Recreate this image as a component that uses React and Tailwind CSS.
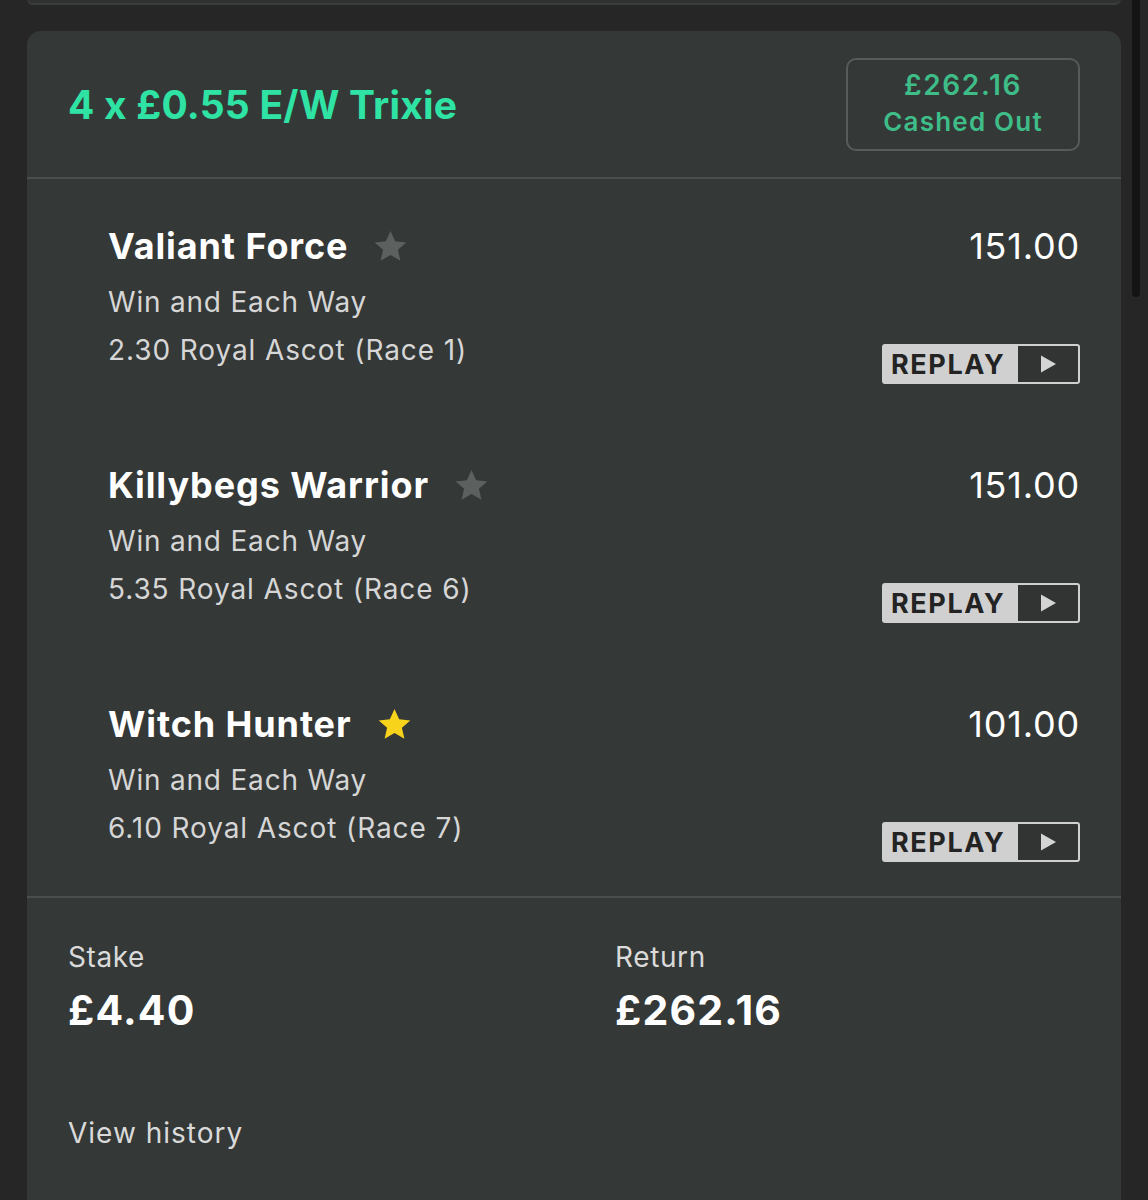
const selections = [
  { name: 'Valiant Force', race: '2.30 Royal Ascot (Race 1)', odds: '151.00', fav: false },
  { name: 'Killybegs Warrior', race: '5.35 Royal Ascot (Race 6)', odds: '151.00', fav: false },
  { name: 'Witch Hunter', race: '6.10 Royal Ascot (Race 7)', odds: '101.00', fav: true },
]

function Star({ active }) {
  return (
    <svg viewBox="0 0 24 24" className="w-[33px] h-[33px]" fill={active ? '#f7d31c' : '#5c605f'}>
      <path d="M12 0.8l3.4 7.4 8.1.8-6.1 5.4 1.8 8-7.2-4.2-7.2 4.2 1.8-8L0.5 9l8.1-.8z" />
    </svg>
  )
}

function ReplayButton() {
  return (
    <div className="flex h-[40px] w-[198px] rounded-[3px] border-2 border-[#d0d0d0] bg-[#d0d0d0] overflow-hidden">
      <div className="flex-1 flex items-center pl-[7px] text-[27px] font-bold tracking-[1.6px] text-[#232323] leading-none">
        REPLAY
      </div>
      <div className="w-[60px] bg-[#313433] flex items-center justify-center">
        <svg viewBox="0 0 20 20" className="w-[20px] h-[20px]" fill="#d4d4d4">
          <path d="M3 1.5L18 10 3 18.5z" />
        </svg>
      </div>
    </div>
  )
}

export default function App() {
  return (
    <div className="relative min-h-[1200px] w-full bg-[#262626] overflow-hidden font-['Inter',sans-serif]">
      {/* previous card edge */}
      <div className="mx-[27px] w-[1094px] h-[6px] -mt-[1px] rounded-b-xl bg-[#2f3231] border-b-2 border-[#3a3d3c]" />

      {/* scrollbar */}
      <div className="absolute right-[8px] top-0 w-[8px] h-[297px] rounded-b-full bg-[#141414]" />

      <div className="mt-[26px] mx-[27px] w-[1094px] rounded-t-[14px] bg-[#343837] pb-[60px]">
        {/* header */}
        <div className="flex items-center justify-between pl-[41px] pr-[41px] pt-[27px] pb-[26px]">
          <h1 className="text-[39px] font-bold text-[#2fe3a5] tracking-[0.2px] mt-[2px]">4 x £0.55 E/W Trixie</h1>
          <div className="w-[234px] h-[93px] rounded-[10px] border-2 border-[#575c5b] flex flex-col items-center justify-center">
            <span className="text-[28px] font-semibold text-[#3fbd89] leading-[38px] tracking-[1.6px] -mt-[3px]">£262.16</span>
            <span className="text-[26px] font-semibold text-[#3fbd89] leading-[36px] tracking-[1.2px]">Cashed Out</span>
          </div>
        </div>
        <div className="h-[2px] bg-[#4a4f4e]" />

        {/* selections */}
        {selections.map((s) => (
          <div key={s.name} className="h-[239px] pt-[43px] pl-[81px] pr-[41px] flex items-start justify-between">
            <div>
              <div className="flex items-center gap-[26px] h-[48px]">
                <span className="text-[36px] font-bold text-white leading-[48px] tracking-[0.9px]">{s.name}</span>
                <Star active={s.fav} />
              </div>
              <div className="mt-[8px] text-[28px] leading-[48px] text-[#d6d6d6] tracking-[0.8px]">Win and Each Way</div>
              <div className="text-[28px] leading-[48px] text-[#d6d6d6] tracking-[0.9px]">{s.race}</div>
            </div>
            <div className="flex flex-col items-end">
              <span className="text-[36px] leading-[48px] text-white tracking-[0.8px]">{s.odds}</span>
              <div className="mt-[74px]">
                <ReplayButton />
              </div>
            </div>
          </div>
        ))}
        <div className="h-[2px] bg-[#4a4f4e]" />

        {/* footer */}
        <div className="pl-[41px] pt-[41px]">
          <div className="flex">
            <div className="w-[547px]">
              <div className="text-[28px] leading-[36px] text-[#dadada] tracking-[0.6px]">Stake</div>
              <div className="mt-[9px] text-[41px] leading-[52px] font-bold text-white tracking-[1.2px]">£4.40</div>
            </div>
            <div>
              <div className="text-[28px] leading-[36px] text-[#dadada] tracking-[0.6px]">Return</div>
              <div className="mt-[9px] text-[41px] leading-[52px] font-bold text-white tracking-[1.2px]">£262.16</div>
            </div>
          </div>
          <div className="mt-[79px] text-[28px] leading-[36px] text-[#dadada] tracking-[1px]">View history</div>
        </div>
      </div>
    </div>
  )
}
